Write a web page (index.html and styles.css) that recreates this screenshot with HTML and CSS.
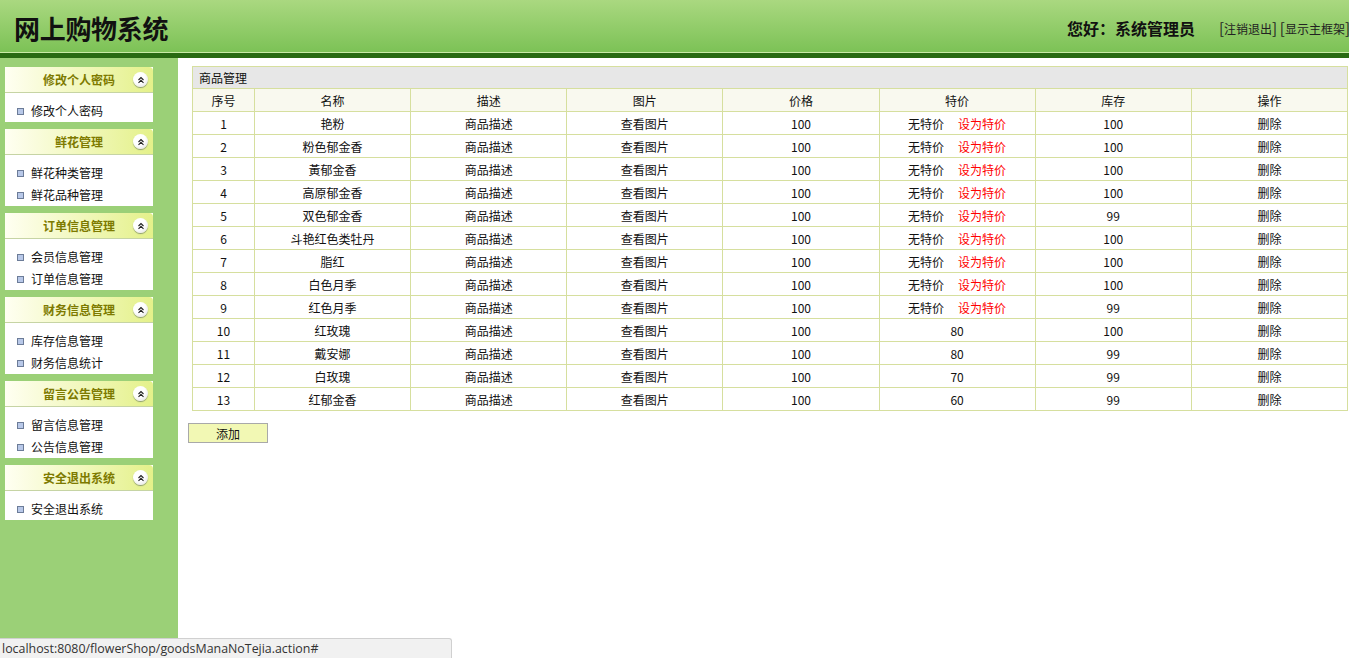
FILE: index.html
```html
<!DOCTYPE html>
<html lang="zh-CN">
<head>
<meta charset="utf-8">
<title>网上购物系统</title>
<link rel="stylesheet" href="styles.css">
</head>
<body>
<div class="page">
  <header class="top">
    <div class="brand">网上购物系统</div>
    <div class="user">
      <span class="hello">您好：系统管理员</span>
      <span class="links"><span class="br">[</span>注销退出<span class="br">]</span> <span class="br">[</span>显示主框架<span class="br">]</span></span>
    </div>
  </header>
  <div class="band"></div>
  <div class="main">
    <aside class="side">
      <div class="panel">
        <div class="ph"><span class="pt">修改个人密码</span><span class="tog"><svg viewBox="0 0 8 8" width="8" height="8"><path d="M1.5 4 L4 1.5 L6.5 4 M1.5 6.8 L4 4.3 L6.5 6.8" fill="none" stroke="#222" stroke-width="1.1"/></svg></span></div>
        <ul class="pb"><li>修改个人密码</li></ul>
      </div>
      <div class="panel">
        <div class="ph"><span class="pt">鲜花管理</span><span class="tog"><svg viewBox="0 0 8 8" width="8" height="8"><path d="M1.5 4 L4 1.5 L6.5 4 M1.5 6.8 L4 4.3 L6.5 6.8" fill="none" stroke="#222" stroke-width="1.1"/></svg></span></div>
        <ul class="pb"><li>鲜花种类管理</li><li>鲜花品种管理</li></ul>
      </div>
      <div class="panel">
        <div class="ph"><span class="pt">订单信息管理</span><span class="tog"><svg viewBox="0 0 8 8" width="8" height="8"><path d="M1.5 4 L4 1.5 L6.5 4 M1.5 6.8 L4 4.3 L6.5 6.8" fill="none" stroke="#222" stroke-width="1.1"/></svg></span></div>
        <ul class="pb"><li>会员信息管理</li><li>订单信息管理</li></ul>
      </div>
      <div class="panel">
        <div class="ph"><span class="pt">财务信息管理</span><span class="tog"><svg viewBox="0 0 8 8" width="8" height="8"><path d="M1.5 4 L4 1.5 L6.5 4 M1.5 6.8 L4 4.3 L6.5 6.8" fill="none" stroke="#222" stroke-width="1.1"/></svg></span></div>
        <ul class="pb"><li>库存信息管理</li><li>财务信息统计</li></ul>
      </div>
      <div class="panel">
        <div class="ph"><span class="pt">留言公告管理</span><span class="tog"><svg viewBox="0 0 8 8" width="8" height="8"><path d="M1.5 4 L4 1.5 L6.5 4 M1.5 6.8 L4 4.3 L6.5 6.8" fill="none" stroke="#222" stroke-width="1.1"/></svg></span></div>
        <ul class="pb"><li>留言信息管理</li><li>公告信息管理</li></ul>
      </div>
      <div class="panel">
        <div class="ph"><span class="pt">安全退出系统</span><span class="tog"><svg viewBox="0 0 8 8" width="8" height="8"><path d="M1.5 4 L4 1.5 L6.5 4 M1.5 6.8 L4 4.3 L6.5 6.8" fill="none" stroke="#222" stroke-width="1.1"/></svg></span></div>
        <ul class="pb"><li>安全退出系统</li></ul>
      </div>
    </aside>
    <section class="content">
      <table class="grid">
        <colgroup><col class="c1"><col class="cw"><col class="cw"><col class="cw"><col class="cw"><col class="cw"><col class="cw"><col class="cw"></colgroup>
        <tr class="title"><td colspan="8">商品管理</td></tr>
        <tr class="head"><td>序号</td><td>名称</td><td>描述</td><td>图片</td><td>价格</td><td>特价</td><td>库存</td><td>操作</td></tr>
        <tr><td>1</td><td>艳粉</td><td>商品描述</td><td>查看图片</td><td>100</td><td>无特价<span class="red">设为特价</span></td><td>100</td><td>删除</td></tr>
        <tr><td>2</td><td>粉色郁金香</td><td>商品描述</td><td>查看图片</td><td>100</td><td>无特价<span class="red">设为特价</span></td><td>100</td><td>删除</td></tr>
        <tr><td>3</td><td>黃郁金香</td><td>商品描述</td><td>查看图片</td><td>100</td><td>无特价<span class="red">设为特价</span></td><td>100</td><td>删除</td></tr>
        <tr><td>4</td><td>高原郁金香</td><td>商品描述</td><td>查看图片</td><td>100</td><td>无特价<span class="red">设为特价</span></td><td>100</td><td>删除</td></tr>
        <tr><td>5</td><td>双色郁金香</td><td>商品描述</td><td>查看图片</td><td>100</td><td>无特价<span class="red">设为特价</span></td><td>99</td><td>删除</td></tr>
        <tr><td>6</td><td>斗艳红色类牡丹</td><td>商品描述</td><td>查看图片</td><td>100</td><td>无特价<span class="red">设为特价</span></td><td>100</td><td>删除</td></tr>
        <tr><td>7</td><td>脂红</td><td>商品描述</td><td>查看图片</td><td>100</td><td>无特价<span class="red">设为特价</span></td><td>100</td><td>删除</td></tr>
        <tr><td>8</td><td>白色月季</td><td>商品描述</td><td>查看图片</td><td>100</td><td>无特价<span class="red">设为特价</span></td><td>100</td><td>删除</td></tr>
        <tr><td>9</td><td>红色月季</td><td>商品描述</td><td>查看图片</td><td>100</td><td>无特价<span class="red">设为特价</span></td><td>99</td><td>删除</td></tr>
        <tr><td>10</td><td>红玫瑰</td><td>商品描述</td><td>查看图片</td><td>100</td><td>80</td><td>100</td><td>删除</td></tr>
        <tr><td>11</td><td>戴安娜</td><td>商品描述</td><td>查看图片</td><td>100</td><td>80</td><td>99</td><td>删除</td></tr>
        <tr><td>12</td><td>白玫瑰</td><td>商品描述</td><td>查看图片</td><td>100</td><td>70</td><td>99</td><td>删除</td></tr>
        <tr><td>13</td><td>红郁金香</td><td>商品描述</td><td>查看图片</td><td>100</td><td>60</td><td>99</td><td>删除</td></tr>
      </table>
      <button class="add" type="button">添加</button>
    </section>
  </div>
</div>
<div class="status">localhost:8080/flowerShop/goodsManaNoTejia.action#</div>
</body>
</html>
```

FILE: styles.css
```css
* { box-sizing: border-box; }
html, body { margin: 0; padding: 0; }
body {
  font-family: "Noto Sans CJK SC", "Noto Sans", sans-serif;
  font-size: 12px;
  color: #111;
  background: #fff;
  overflow: hidden;
}
.page {
  display: flex;
  flex-direction: column;
  height: 100vh;
  width: 1349px;
}
.top {
  height: 53px;
  flex: none;
  background: linear-gradient(#aad880, #7cc256);
  display: flex;
  align-items: center;
  justify-content: space-between;
  padding: 0 0 0 14px;
  border-bottom: 1px solid #c9eba6;
  overflow: hidden;
}
.brand {
  font-size: 26px;
  font-weight: bold;
  color: #111;
  letter-spacing: -0.3px;
  line-height: 1;
  padding-top: 4px;
}
.user {
  display: flex;
  align-items: center;
  white-space: nowrap;
  margin-right: -1px;
  padding-top: 3px;
}
.hello {
  font-size: 16px;
  font-weight: bold;
  color: #111;
  margin-right: 24px;
}
.links { font-size: 12px; color: #222; }
.br { font-size: 15px; }
.band {
  height: 5px;
  flex: none;
  background: #286a12;
}
.main {
  flex: 1;
  display: flex;
  min-height: 0;
}
.side {
  width: 178px;
  flex: none;
  background: #9bd077;
  padding: 9px 25px 0 5px;
  display: flex;
  flex-direction: column;
  gap: 7px;
}
.panel { background: #fff; }
.ph {
  height: 26px;
  border-radius: 4px 4px 0 0;
  background: linear-gradient(to right, #fffff2, #e4f18a);
  border-bottom: 1px solid #c6d4a4;
  position: relative;
  display: flex;
  align-items: center;
  justify-content: center;
}
.pt {
  font-weight: bold;
  color: #7d7a00;
  font-size: 12px;
}
.tog {
  position: absolute;
  right: 5px;
  top: 5px;
  width: 15px;
  height: 15px;
  border-radius: 50%;
  background: radial-gradient(circle at 40% 35%, #ffffff 45%, #d8d8d8);
  box-shadow: 0 1px 1px #8a9a70;
  display: flex;
  align-items: center;
  justify-content: center;
}
.tog svg { display: block; }
.pb {
  list-style: none;
  margin: 0;
  padding: 7px 0 0 12px;
}
.pb li {
  height: 22px;
  line-height: 22px;
  display: flex;
  align-items: center;
  color: #111;
}
.pb li::before {
  content: "";
  width: 5px;
  height: 5px;
  border: 1px solid #6c7c98;
  background: #b8c8e8;
  margin-right: 7px;
  flex: none;
}
.content {
  flex: 1;
  padding: 8px 0 0 10px;
  min-width: 0;
}
.grid {
  border-collapse: collapse;
  margin-left: 4px;
  table-layout: fixed;
  width: 1156px;
}
.c1 { width: 62px; }
.cw { width: 156px; }
.grid td {
  border: 1px solid #d6df9e;
  height: 23px;
  padding: 0;
  text-align: center;
  color: #111;
  white-space: nowrap;
}
.grid .title td {
  background: #e7e7e7;
  text-align: left;
  padding-left: 6px;
  height: 22px;
}
.grid .head td { background: #f9f9ef; }
.red { color: #ff0000; margin-left: 14px; }
.add {
  display: block;
  margin-top: 12px;
  width: 80px;
  height: 20px;
  background: #f2f8b4;
  border: 1px solid #a9a9a9;
  font-family: "Noto Sans CJK SC", sans-serif;
  font-size: 12px;
  color: #111;
  padding: 0;
}
.status {
  position: fixed;
  left: 0;
  bottom: 0;
  width: 452px;
  height: 20px;
  background: #f1f1f1;
  border-top: 1px solid #d0d0d0;
  border-right: 1px solid #d0d0d0;
  border-top-right-radius: 3px;
  font-family: "Open Sans", "Noto Sans", sans-serif;
  font-size: 12.4px;
  color: #333;
  line-height: 19px;
  padding-left: 2px;
}
```
